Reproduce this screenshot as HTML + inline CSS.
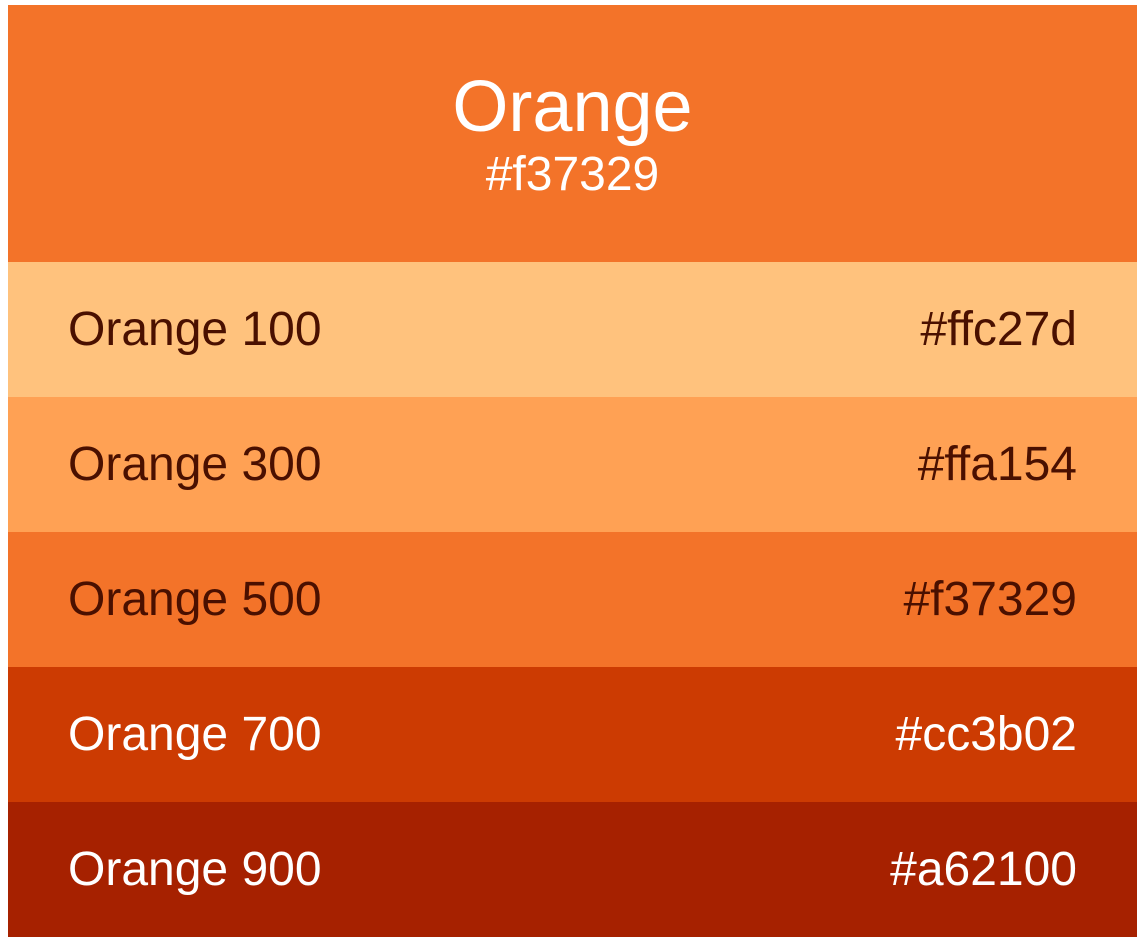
<!DOCTYPE html>
<html><head><style>
html,body{margin:0;padding:0;background:#fff;width:1145px;height:945px;overflow:hidden}
body{font-family:"Liberation Sans",sans-serif;position:relative}
.hd{position:absolute;left:8px;top:5px;width:1129px;height:257px;background:#f37329;color:#fff}
.hd .t{position:absolute;left:0;width:100%;text-align:center;line-height:1;white-space:nowrap}
.row{position:absolute;left:8px;width:1129px;height:135px}
.row span{position:absolute;top:44px;font-size:48px;line-height:48px;white-space:nowrap}
.row .l{left:60px}.row .r{right:60px}
.d{color:#4a1000}.w{color:#fff}
</style></head><body>
<div class="hd">
<div class="t" style="top:66px;font-size:72px">Orange</div>
<div class="t" style="top:146px;font-size:48px">#f37329</div>
</div>
<div class="row d" style="top:262px;background:#ffc27d"><span class="l">Orange 100</span><span class="r">#ffc27d</span></div>
<div class="row d" style="top:397px;background:#ffa154"><span class="l">Orange 300</span><span class="r">#ffa154</span></div>
<div class="row d" style="top:532px;background:#f37329"><span class="l">Orange 500</span><span class="r">#f37329</span></div>
<div class="row w" style="top:667px;background:#cc3b02"><span class="l">Orange 700</span><span class="r">#cc3b02</span></div>
<div class="row w" style="top:802px;background:#a62100"><span class="l">Orange 900</span><span class="r">#a62100</span></div>
</body></html>
